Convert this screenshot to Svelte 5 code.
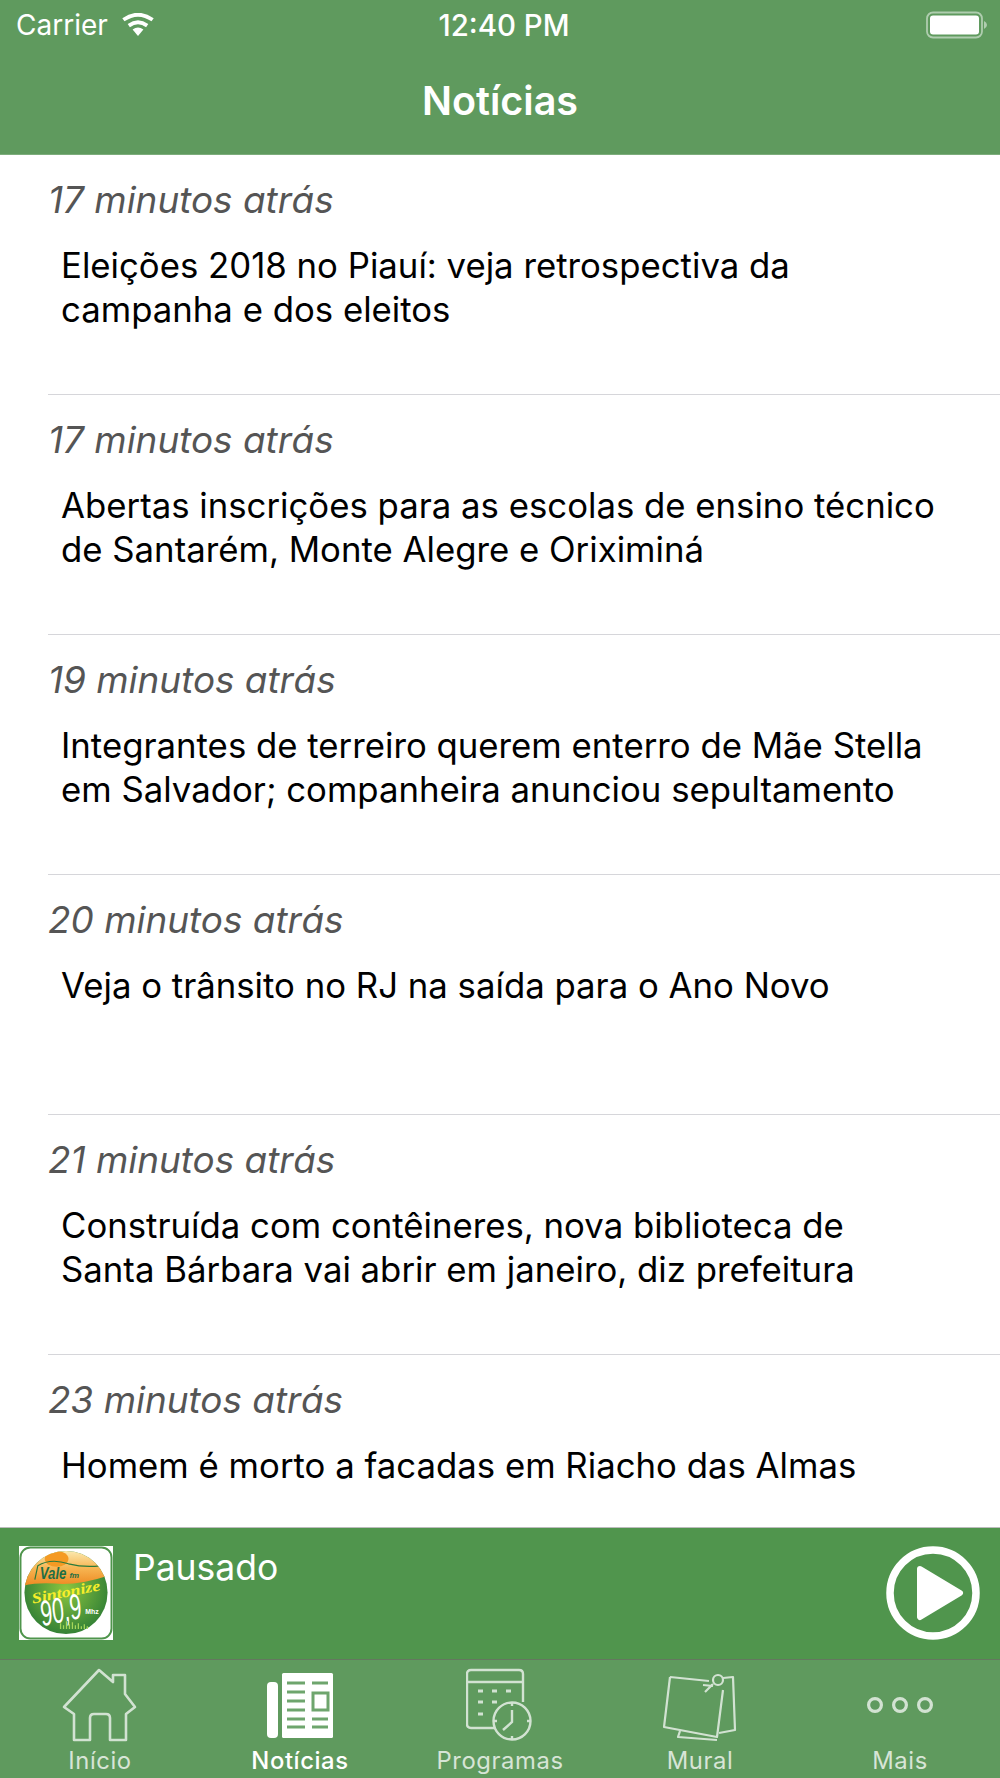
<script>
  const news = [
    { time: '17 minutos atrás', title: 'Eleições 2018 no Piauí: veja retrospectiva da campanha e dos eleitos' },
    { time: '17 minutos atrás', title: 'Abertas inscrições para as escolas de ensino técnico de Santarém, Monte Alegre e Oriximiná' },
    { time: '19 minutos atrás', title: 'Integrantes de terreiro querem enterro de Mãe Stella em Salvador; companheira anunciou sepultamento' },
    { time: '20 minutos atrás', title: 'Veja o trânsito no RJ na saída para o Ano Novo' },
    { time: '21 minutos atrás', title: 'Construída com contêineres, nova biblioteca de Santa Bárbara vai abrir em janeiro, diz prefeitura' },
    { time: '23 minutos atrás', title: 'Homem é morto a facadas em Riacho das Almas' }
  ];
</script>

<div class="screen">
  <header class="nav">
    <div class="status">
      <div class="status-left">
        <span>Carrier</span>
        <svg class="wifi" width="34" height="24" viewBox="0 0 34 24">
          <path d="M17 23 L11.6 16.4 Q17 12.6 22.4 16.4 Z" fill="#fff" />
          <path d="M7.8 12.6 Q17 6 26.2 12.6" fill="none" stroke="#fff" stroke-width="3.8" />
          <path d="M2.4 6.8 Q17 -3.4 31.6 6.8" fill="none" stroke="#fff" stroke-width="3.8" />
        </svg>
      </div>
      <span class="clock">12:40 PM</span>
      <svg class="battery" width="62" height="28" viewBox="0 0 62 28">
        <rect x="1" y="1.5" width="55" height="25" rx="6" fill="none" stroke="#fff" stroke-opacity="0.5" stroke-width="1.8" />
        <rect x="4" y="4.5" width="49" height="19" rx="3" fill="#fff" />
        <path d="M58 10 Q61 11.5 61 14 Q61 16.5 58 18 Z" fill="#fff" fill-opacity="0.5" />
      </svg>
    </div>
    <h1>Notícias</h1>
  </header>

  <main class="list">
    {#each news as item}
      <article class="row">
        <p class="time">{item.time}</p>
        <p class="title">{item.title}</p>
      </article>
    {/each}
  </main>

  <section class="player">
    <svg class="logo" width="94" height="94" viewBox="0 0 95 95">
      <defs>
        <clipPath id="disc"><circle cx="47.5" cy="47" r="42" /></clipPath>
        <linearGradient id="sky" x1="0" y1="0" x2="0" y2="1">
          <stop offset="0" stop-color="#fbe9b0" />
          <stop offset="0.5" stop-color="#f7b552" />
          <stop offset="1" stop-color="#ee8a22" />
        </linearGradient>
        <radialGradient id="grass" cx="0.5" cy="0.45" r="0.6">
          <stop offset="0" stop-color="#8cc63f" />
          <stop offset="1" stop-color="#2a7a35" />
        </radialGradient>
      </defs>
      <rect width="95" height="95" fill="#fff" />
      <rect x="1.5" y="1.5" width="92" height="92" rx="10" fill="#fff" stroke="#4f954c" stroke-width="2" />
      <g clip-path="url(#disc)">
        <rect x="5" y="5" width="85" height="85" fill="url(#grass)" />
        <path d="M5 5 H90 V30 Q60 40 36 38 Q18 37 5 40 Z" fill="url(#sky)" />
        <ellipse cx="38" cy="13" rx="12" ry="8" fill="#f59a23" />
        <path d="M16 34 L19 20 Q32 12 50 18 Q66 22 82 20" fill="none" stroke="#2a7a3b" stroke-width="1.2" />
      </g>
      <text class="logo-vale" x="21" y="33" textLength="27" lengthAdjust="spacingAndGlyphs">Vale</text>
      <text class="logo-fm" x="51" y="32">fm</text>
      <text class="logo-sint" x="14" y="58" textLength="70" lengthAdjust="spacingAndGlyphs" transform="rotate(-11 14 58)">Sintonize</text>
      <text class="logo-freq" x="24" y="81" textLength="42" lengthAdjust="spacingAndGlyphs" transform="rotate(-12 24 81)">90,9</text>
      <text class="logo-mhz" x="67" y="69">Mhz</text>
      <path d="M42 84 V78 M45 84 V80 M48 84 V76 M51 84 V79 M54 84 V77 M57 84 V80 M60 84 V78 M63 84 V81 M66 84 V79 M69 84 V81" stroke="#a6d65a" stroke-width="1.3" />
    </svg>
    <span class="state">Pausado</span>
    <svg class="play" width="94" height="94" viewBox="0 0 94 94">
      <circle cx="47" cy="47" r="43" fill="none" stroke="#fff" stroke-width="7.5" />
      <path d="M34 23 L74 47 L34 71 Z" fill="#fff" stroke="#fff" stroke-width="6" stroke-linejoin="round" />
    </svg>
  </section>

  <nav class="tabs">
    <div class="tab">
      <svg width="76" height="76" viewBox="0 0 76 76" fill="none" stroke="#fff" stroke-width="2.6" stroke-linejoin="round">
        <path d="M37 2 L51 14 V7 H63 V26 L73 39 L64 46 V72 H48 V50 Q48 46 44 46 H32 Q28 46 28 50 V72 H12 V46 L2 39 Z" />
      </svg>
      <span>Início</span>
    </div>
    <div class="tab active">
      <svg width="68" height="72" viewBox="0 0 68 72">
        <rect x="1" y="14" width="11" height="56" rx="4" fill="#fff" />
        <rect x="16" y="5" width="51" height="65" rx="1.5" fill="#fff" />
        <g stroke="#6ea56d" stroke-width="3" fill="none">
          <path d="M21 15 H39 M46 15 H62 M21 24 H39 M21 33 H39 M21 42 H39 M21 51 H39 M46 51 H62 M21 59 H39 M46 59 H62" />
          <rect x="47" y="25" width="15" height="17" />
        </g>
      </svg>
      <span>Notícias</span>
    </div>
    <div class="tab">
      <svg width="68" height="74" viewBox="0 0 68 74" fill="none" stroke="#fff" stroke-width="2.4">
        <path d="M28 60 H5 Q1 60 1 56 V6 Q1 2 5 2 H53 Q57 2 57 6 V34" />
        <path d="M1 14 H57" />
        <path d="M12 23 H17 M26 23 H31 M40 23 H45 M12 34 H17 M26 34 H31 M12 46 H17" stroke-width="3" />
        <circle cx="46" cy="53" r="18.5" />
        <path d="M46 42 V54 L37 62" />
        <path d="M46 34.5 V38 M46 68 V71.5 M27.5 53 H31 M61 53 H64.5" />
      </svg>
      <span>Programas</span>
    </div>
    <div class="tab">
      <svg width="74" height="74" viewBox="0 0 74 74" fill="none" stroke="#fff" stroke-width="2.2" stroke-linejoin="round">
        <path d="M7 9 L46 13 M60 22 L54 69 L1 59 L7 9" />
        <path d="M60 10 L70 9 L72 62 L56 65" />
        <path d="M17 63 L15 69 L54 72" />
        <circle cx="55" cy="12" r="5" />
        <path d="M50 16 L42 24 M40 17 L50 18" />
      </svg>
      <span>Mural</span>
    </div>
    <div class="tab">
      <svg width="68" height="76" viewBox="0 0 68 76" fill="none" stroke="#fff" stroke-width="3.2">
        <circle cx="9" cy="37" r="6.4" />
        <circle cx="34" cy="37" r="6.4" />
        <circle cx="59" cy="37" r="6.4" />
      </svg>
      <span>Mais</span>
    </div>
  </nav>
</div>

<style>
  :global(body) {
    margin: 0;
  }
  .screen {
    width: 1000px;
    height: 1778px;
    display: flex;
    flex-direction: column;
    overflow: hidden;
    background: #fff;
    font-family: Inter, "Liberation Sans", sans-serif;
  }

  /* ---- header ---- */
  .nav {
    height: 155px;
    box-sizing: border-box;
    background: #5f9a5e;
    border-bottom: 1px solid #7dad7c;
    color: #fff;
  }
  .status {
    height: 50px;
    box-sizing: border-box;
    padding: 0 12px 0 16px;
    display: grid;
    grid-template-columns: 1fr auto 1fr;
    align-items: center;
    font-size: 28px;
  }
  .status-left {
    display: flex;
    align-items: center;
    gap: 13px;
  }
  .clock {
    margin-left: 4px;
    font-size: 29.4px;
    font-weight: 500;
  }
  .battery {
    justify-self: end;
  }
  .nav h1 {
    margin: 0;
    height: 104px;
    line-height: 103px;
    text-align: center;
    font-size: 39.5px;
    font-weight: 600;
  }

  /* ---- news list ---- */
  .list {
    flex: 1;
    min-height: 0;
    overflow: hidden;
    padding-left: 48px;
  }
  .row {
    height: 240px;
    box-sizing: border-box;
    border-bottom: 1px solid #d6d6da;
  }
  .time {
    margin: 0;
    padding-top: 22px;
    line-height: 45px;
    font-size: 36.9px;
    font-style: italic;
    color: #555;
  }
  .title {
    margin: 0;
    padding: 21px 58px 0 13px;
    font-size: 34.75px;
    line-height: 44px;
    color: #000;
  }

  /* ---- player ---- */
  .player {
    height: 133px;
    box-sizing: border-box;
    flex-shrink: 0;
    padding: 18px 20px 0 19px;
    display: flex;
    align-items: flex-start;
    background: #50954d;
    border-top: 1px solid #bcbcbc;
    border-bottom: 1px solid #64785f;
  }
  .state {
    margin-left: 20px;
    font-size: 35.5px;
    line-height: 44px;
    color: #fff;
  }
  .play {
    margin-left: auto;
  }
  .logo-vale {
    font: italic 700 16px "Liberation Sans", sans-serif;
    fill: #1f6e45;
  }
  .logo-fm {
    font: italic 700 8px "Liberation Sans", sans-serif;
    fill: #1f6e45;
  }
  .logo-sint {
    font: italic 700 15px "Liberation Serif", serif;
    fill: #f6ee2a;
  }
  .logo-freq {
    font: italic 400 36px "Liberation Sans", sans-serif;
    fill: #fff;
  }
  .logo-mhz {
    font: 700 7px "Liberation Sans", sans-serif;
    fill: #fff;
  }

  /* ---- tab bar ---- */
  .tabs {
    height: 118px;
    flex-shrink: 0;
    display: grid;
    grid-template-columns: repeat(5, 1fr);
    background: #5f9a5e;
  }
  .tab {
    display: flex;
    flex-direction: column;
    align-items: center;
    justify-content: flex-end;
    position: relative;
    padding-bottom: 3px;
  }
  .tab svg {
    position: absolute;
    top: 8px;
    left: 50%;
    transform: translateX(-50%);
    opacity: 0.72;
  }
  .tab.active svg {
    opacity: 1;
  }
  .tab span {
    font-size: 23.8px;
    line-height: 28px;
    letter-spacing: 0.6px;
    color: rgba(255, 255, 255, 0.75);
  }
  .tab.active span {
    font-weight: 500;
    color: #fff;
  }
</style>
